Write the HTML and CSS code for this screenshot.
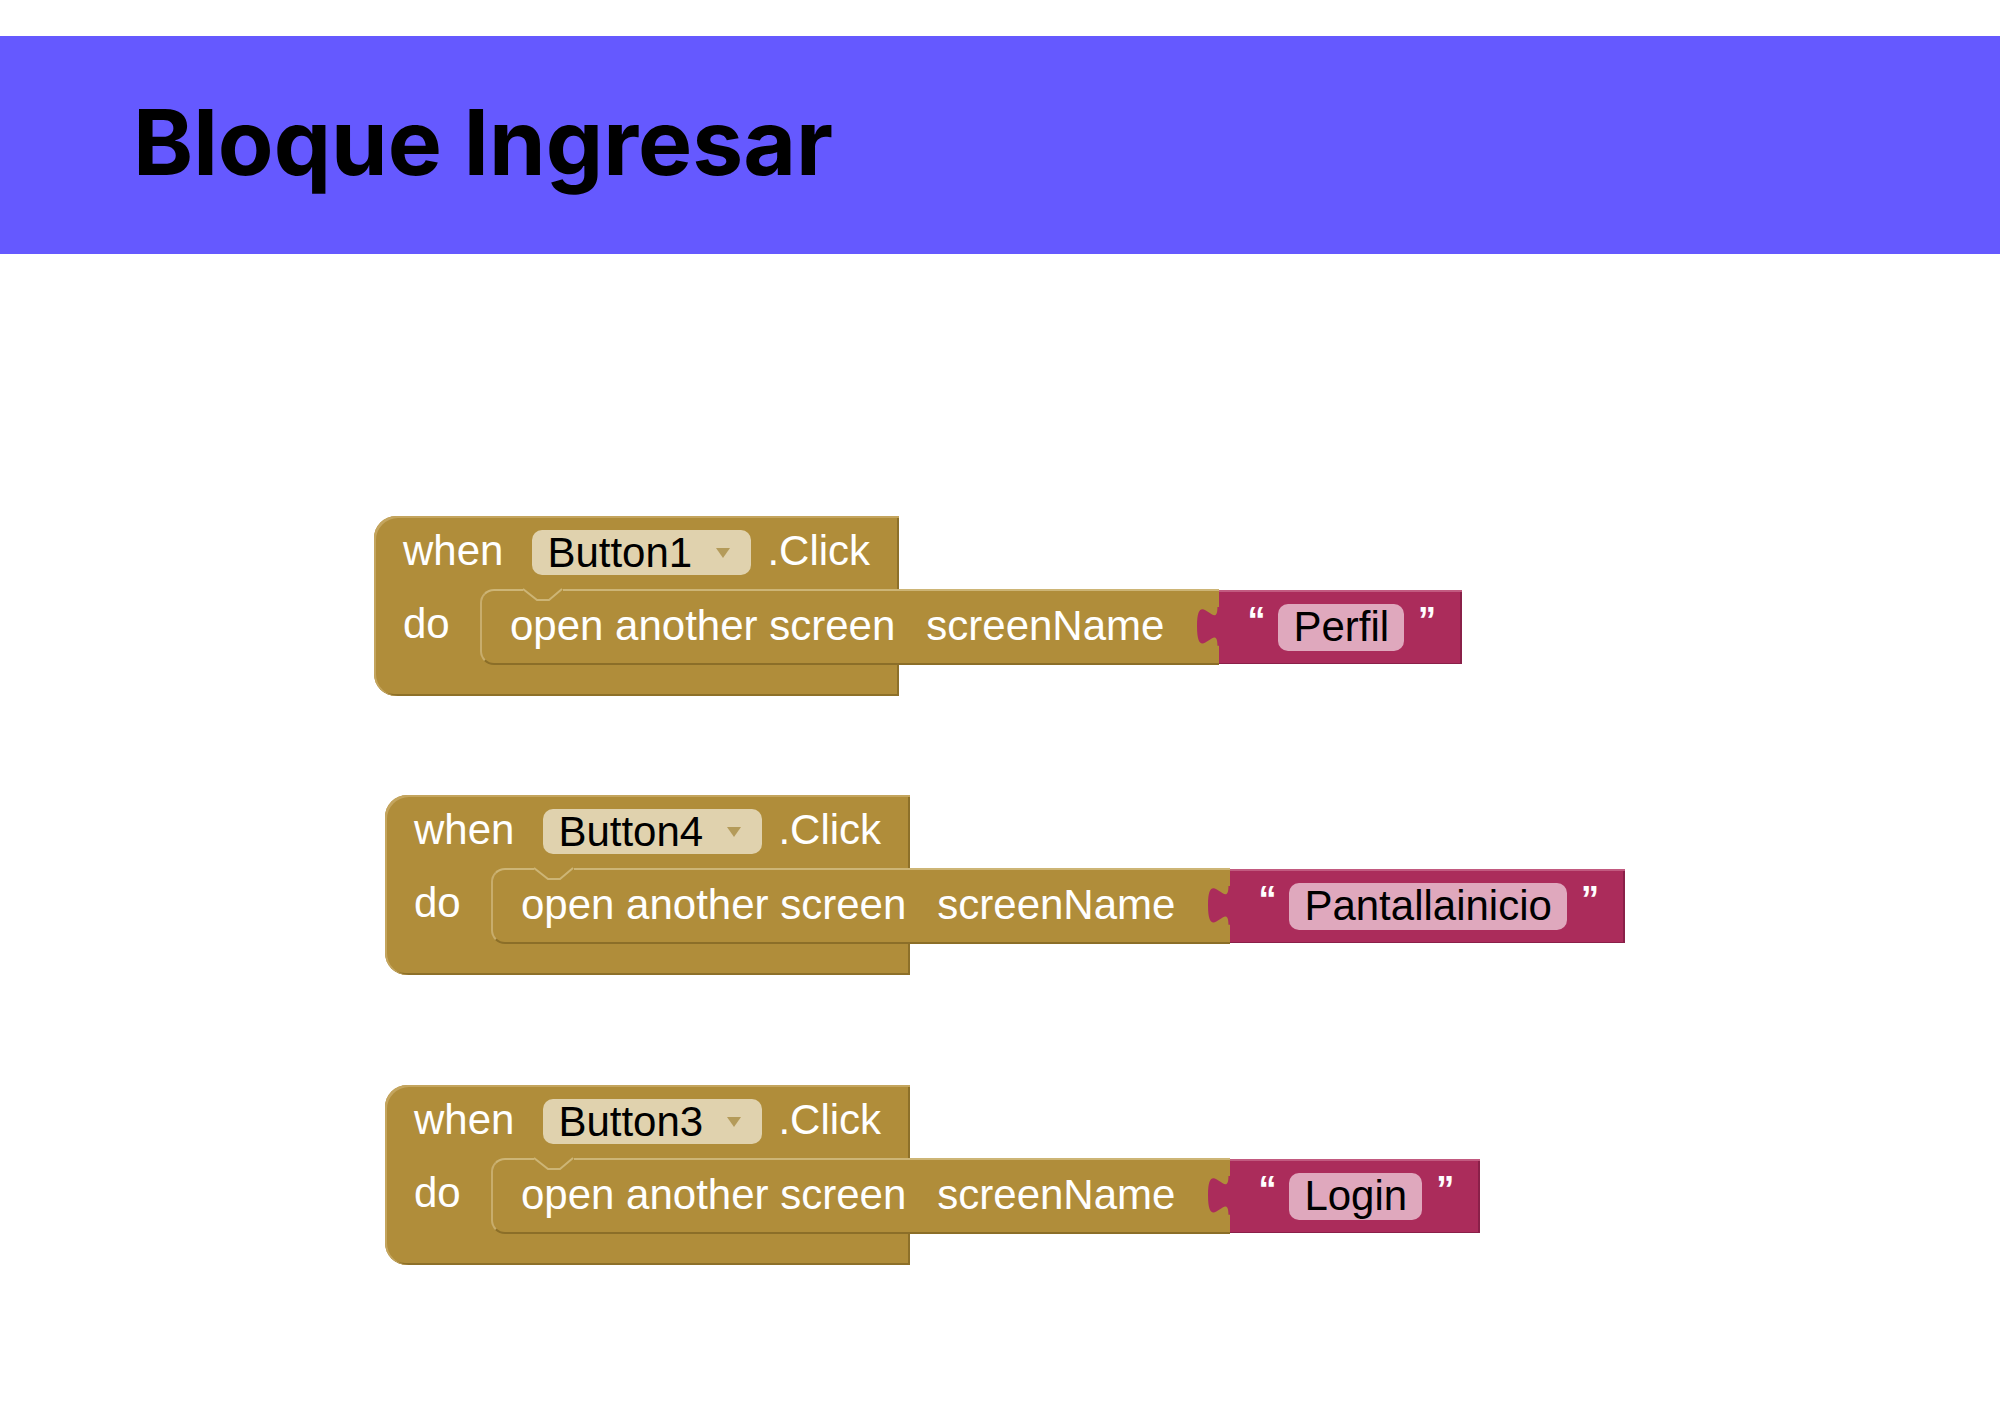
FILE: index.html
```html
<!DOCTYPE html>
<html lang="es">
<head>
<meta charset="utf-8">
<title>Bloque Ingresar</title>
<link rel="stylesheet" href="styles.css">
</head>
<body>
<header class="banner">
  <h1 class="title">Bloque Ingresar</h1>
</header>
<main class="canvas">

  <div class="event ev1">
    <div class="hat">
      <span class="lbl">when</span>
      <span class="dropdown">Button1<svg class="tri" width="14" height="10" viewBox="0 0 14 10"><polygon points="0,0 14,0 7,10" /></svg></span>
      <span class="lbl">.Click</span>
    </div>
    <div class="body">
      <div class="do-col"><span class="lbl">do</span></div>
      <div class="stmt">
        <svg class="notch" width="40" height="14" viewBox="0 0 40 14"><rect x="0" y="0" width="40" height="3" class="notch-fill"/><polyline points="0,1 14,12 26,12 39,1" class="notch-line"/></svg>
        <span class="lbl">open another screen</span>
        <span class="lbl">screenName</span>
      </div>
      <div class="text-block">
        <svg class="tab" width="24" height="40" viewBox="-8.4 0 9.4 15.5" preserveAspectRatio="none"><path d="M1,0 L0,0 C0,10 -8,-8 -8,7.5 C-8,23 0,5 0,15 L1,15 Z"/></svg>
        <span class="q">“</span><span class="field">Perfil</span><span class="q">”</span>
      </div>
    </div>
    <div class="foot"></div>
  </div>

  <div class="event ev2">
    <div class="hat">
      <span class="lbl">when</span>
      <span class="dropdown">Button4<svg class="tri" width="14" height="10" viewBox="0 0 14 10"><polygon points="0,0 14,0 7,10" /></svg></span>
      <span class="lbl">.Click</span>
    </div>
    <div class="body">
      <div class="do-col"><span class="lbl">do</span></div>
      <div class="stmt">
        <svg class="notch" width="40" height="14" viewBox="0 0 40 14"><rect x="0" y="0" width="40" height="3" class="notch-fill"/><polyline points="0,1 14,12 26,12 39,1" class="notch-line"/></svg>
        <span class="lbl">open another screen</span>
        <span class="lbl">screenName</span>
      </div>
      <div class="text-block">
        <svg class="tab" width="24" height="40" viewBox="-8.4 0 9.4 15.5" preserveAspectRatio="none"><path d="M1,0 L0,0 C0,10 -8,-8 -8,7.5 C-8,23 0,5 0,15 L1,15 Z"/></svg>
        <span class="q">“</span><span class="field">Pantallainicio</span><span class="q">”</span>
      </div>
    </div>
    <div class="foot"></div>
  </div>

  <div class="event ev3">
    <div class="hat">
      <span class="lbl">when</span>
      <span class="dropdown">Button3<svg class="tri" width="14" height="10" viewBox="0 0 14 10"><polygon points="0,0 14,0 7,10" /></svg></span>
      <span class="lbl">.Click</span>
    </div>
    <div class="body">
      <div class="do-col"><span class="lbl">do</span></div>
      <div class="stmt">
        <svg class="notch" width="40" height="14" viewBox="0 0 40 14"><rect x="0" y="0" width="40" height="3" class="notch-fill"/><polyline points="0,1 14,12 26,12 39,1" class="notch-line"/></svg>
        <span class="lbl">open another screen</span>
        <span class="lbl">screenName</span>
      </div>
      <div class="text-block">
        <svg class="tab" width="24" height="40" viewBox="-8.4 0 9.4 15.5" preserveAspectRatio="none"><path d="M1,0 L0,0 C0,10 -8,-8 -8,7.5 C-8,23 0,5 0,15 L1,15 Z"/></svg>
        <span class="q">“</span><span class="field">Login</span><span class="q">”</span>
      </div>
    </div>
    <div class="foot"></div>
  </div>

</main>
</body>
</html>
```

FILE: styles.css
```css
html, body {
  margin: 0;
  padding: 0;
  background: #ffffff;
}

body {
  width: 2000px;
  height: 1414px;
  overflow: hidden;
  font-family: "Liberation Sans", Arial, sans-serif;
}

.banner {
  margin-top: 36px;
  height: 218px;
  box-sizing: border-box;
  background: #6559ff;
  padding-left: 133px;
  padding-bottom: 6px;
  display: flex;
  align-items: center;
}

.title {
  margin: 0;
  font-family: "Inter", "DejaVu Sans", sans-serif;
  font-weight: 700;
  font-size: 91px;
  letter-spacing: 0;
  color: #000000;
}

.canvas {
  padding-top: 262px;
  display: flex;
  flex-direction: column;
  align-items: flex-start;
}

.event {
  display: flex;
  flex-direction: column;
  align-items: flex-start;
}

.ev1 { margin-left: 374px; }
.ev2 { margin-left: 385px; margin-top: 99px; }
.ev3 { margin-left: 385px; margin-top: 110px; }

.lbl {
  color: #ffffff;
  font-size: 42px;
  white-space: nowrap;
}

/* ---------- event (hat) block ---------- */
.hat {
  width: 525px;
  height: 73px;
  box-sizing: border-box;
  background: #b08d3a;
  border-top-left-radius: 22px;
  display: flex;
  align-items: center;
  padding: 0 0 3px 29px;
  box-shadow: inset 2px 2px 0 #c4a55e, inset -2px 0 0 #8d7029;
}

.dropdown {
  margin-left: 29px;
  margin-top: 3px;
  height: 45px;
  width: 219px;
  box-sizing: border-box;
  padding-left: 15px;
  border-radius: 10px;
  background: #e0d2ae;
  color: #000000;
  font-size: 42px;
  display: flex;
  align-items: center;
  white-space: nowrap;
}

.tri {
  margin-left: 24px;
  fill: #b49b5a;
}

.hat .dropdown + .lbl {
  margin-left: 16px;
}

.body {
  display: flex;
  align-items: stretch;
}

.do-col {
  width: 126px;
  margin-right: -20px;
  height: 76px;
  box-sizing: border-box;
  background: #b08d3a;
  padding: 11px 0 0 29px;
  box-shadow: inset 2px 0 0 #c4a55e;
}

.stmt {
  position: relative;
  height: 76px;
  box-sizing: border-box;
  background: #b08d3a;
  border-top: 2px solid #cdb576;
  border-left: 2px solid #c8ad6c;
  border-bottom: 2px solid #8b6e28;
  border-top-left-radius: 14px;
  border-bottom-left-radius: 14px;
  padding: 11px 55px 0 28px;
  display: flex;
  align-items: flex-start;
  gap: 31px;
}

.notch {
  position: absolute;
  left: 41px;
  top: -3px;
}

.notch-fill { fill: #b08d3a; }

.notch-line {
  fill: none;
  stroke: #cdb576;
  stroke-width: 2;
}

/* ---------- text block ---------- */
.text-block {
  position: relative;
  align-self: center;
  height: 74px;
  box-sizing: border-box;
  background: #ab2c5b;
  padding: 0 26px 0 28px;
  display: flex;
  align-items: center;
  box-shadow: inset 0 2px 0 #c25a80, inset -2px 0 0 #8a2049, inset 0 -1px 0 #8a2049;
}

.tab {
  position: absolute;
  left: -23px;
  top: 17px;
  fill: #ab2c5b;
}

.q {
  align-self: flex-start;
  margin-top: 13px;
  color: #ffffff;
  font-size: 36px;
  font-weight: 700;
  line-height: 1;
}

.field {
  height: 47px;
  box-sizing: border-box;
  margin: 0 14px 0 13px;
  padding: 0 15px;
  border-radius: 10px;
  background: #dfa8bd;
  color: #000000;
  font-size: 42px;
  display: flex;
  align-items: center;
  white-space: nowrap;
}

.foot {
  width: 525px;
  height: 31px;
  box-sizing: border-box;
  background: #b08d3a;
  border-bottom-left-radius: 22px;
  box-shadow: inset 2px 0 0 #c4a55e, inset -2px -2px 0 #8d7029;
}
```
